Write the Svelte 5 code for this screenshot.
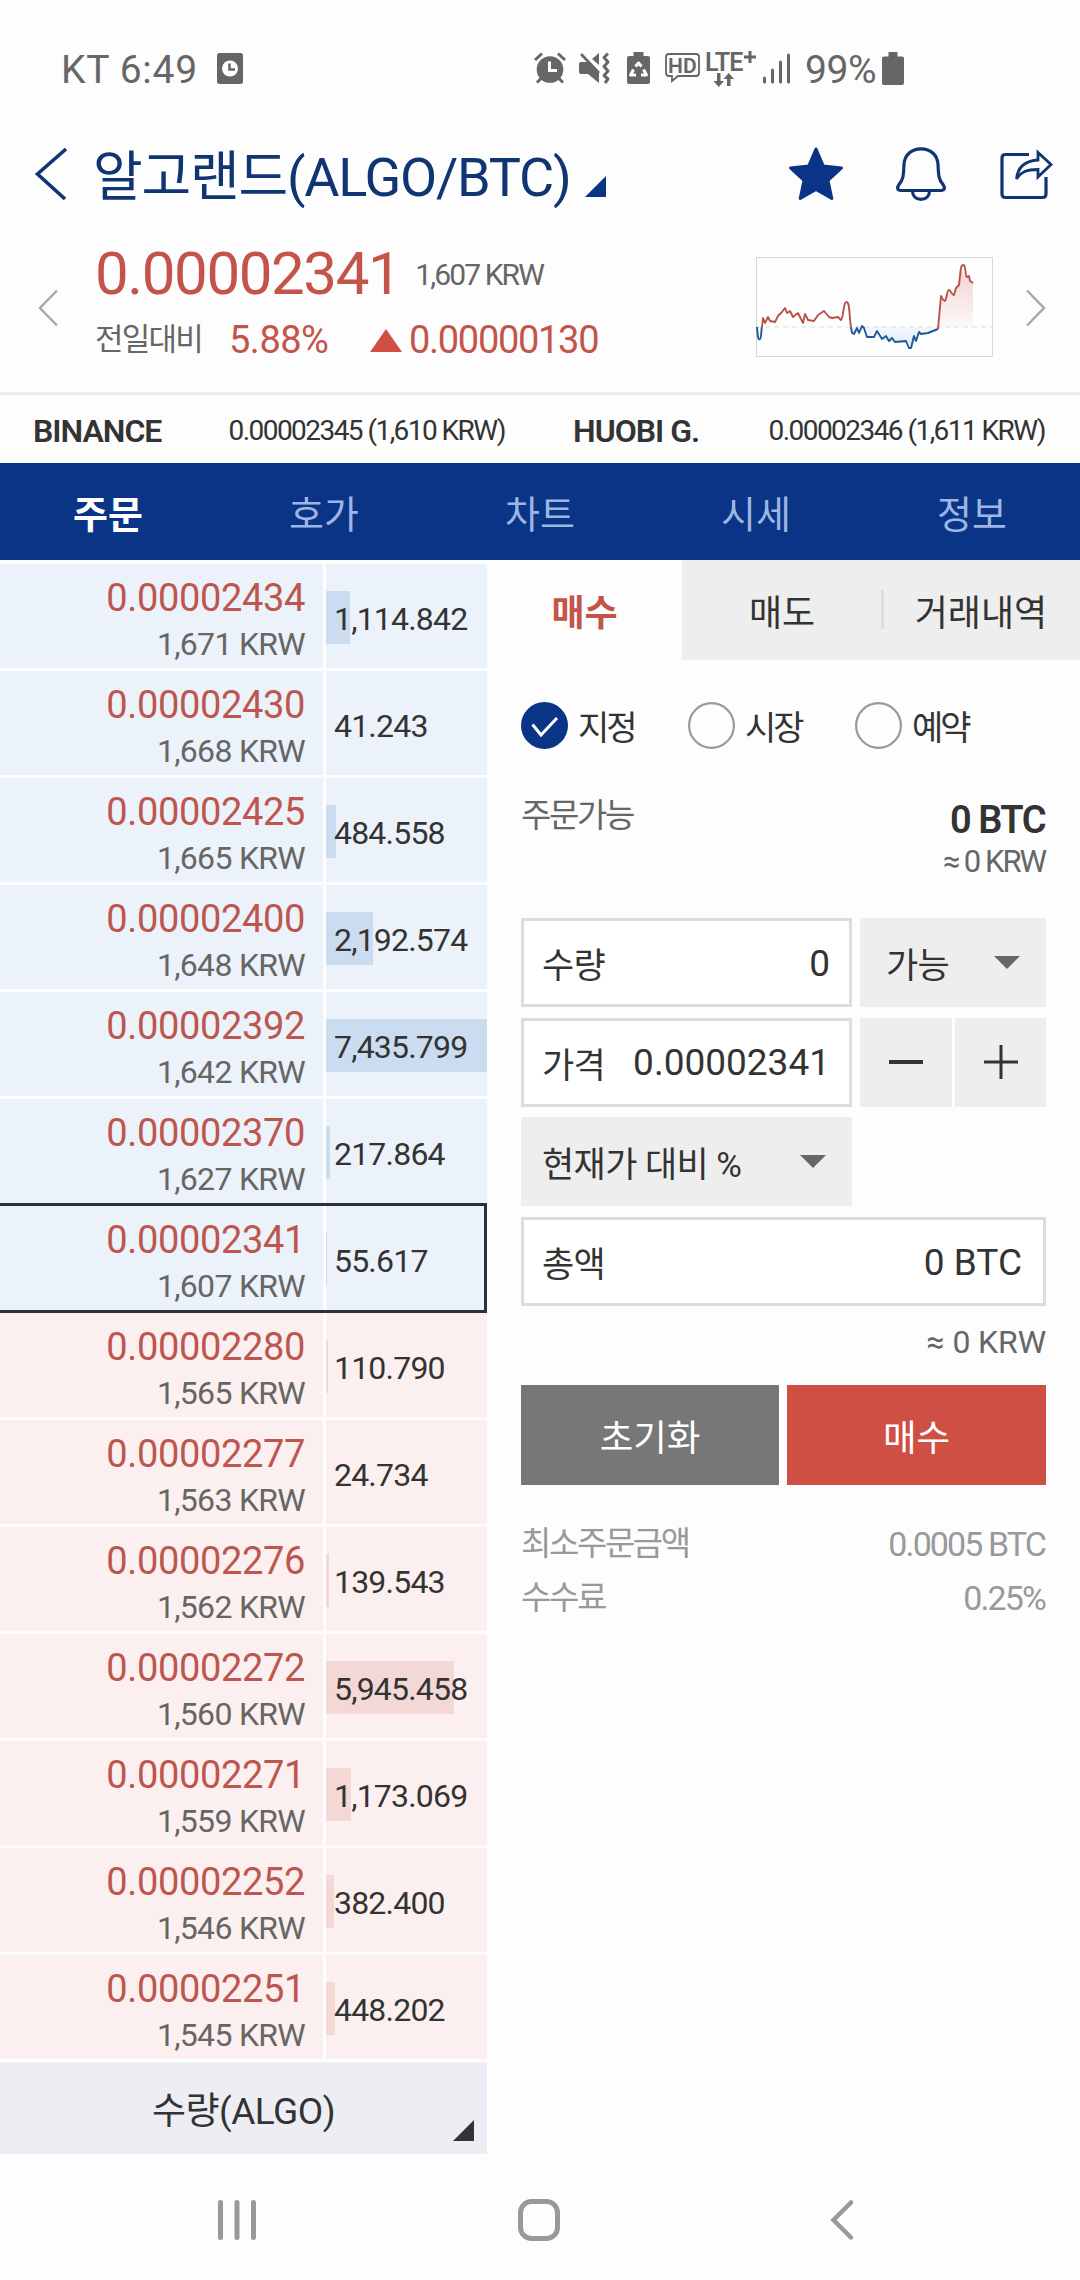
<script>
  const exchanges = [
    { name: 'BINANCE', price: '0.00002345 (1,610 KRW)' },
    { name: 'HUOBI G.', price: '0.00002346 (1,611 KRW)' }
  ];

  const navTabs = ['주문', '호가', '차트', '시세', '정보'];
  const sideTabs = ['매수', '매도', '거래내역'];
  const orderTypes = ['지정', '시장', '예약'];

  const orders = [
    { price: '0.00002434', krw: '1,671', amount: '1,114.842', side: 'ask' },
    { price: '0.00002430', krw: '1,668', amount: '41.243', side: 'ask' },
    { price: '0.00002425', krw: '1,665', amount: '484.558', side: 'ask' },
    { price: '0.00002400', krw: '1,648', amount: '2,192.574', side: 'ask' },
    { price: '0.00002392', krw: '1,642', amount: '7,435.799', side: 'ask' },
    { price: '0.00002370', krw: '1,627', amount: '217.864', side: 'ask' },
    { price: '0.00002341', krw: '1,607', amount: '55.617', side: 'ask' },
    { price: '0.00002280', krw: '1,565', amount: '110.790', side: 'bid' },
    { price: '0.00002277', krw: '1,563', amount: '24.734', side: 'bid' },
    { price: '0.00002276', krw: '1,562', amount: '139.543', side: 'bid' },
    { price: '0.00002272', krw: '1,560', amount: '5,945.458', side: 'bid' },
    { price: '0.00002271', krw: '1,559', amount: '1,173.069', side: 'bid' },
    { price: '0.00002252', krw: '1,546', amount: '382.400', side: 'bid' },
    { price: '0.00002251', krw: '1,545', amount: '448.202', side: 'bid' }
  ];

  let activeNav = $state('주문');
  let activeSide = $state('매수');
  let orderType = $state('지정');
  let price = $state('0.00002341');

  const toNumber = (text) => Number(text.replace(/,/g, ''));
  const maxAmount = Math.max(...orders.map((o) => toNumber(o.amount)));
  const barWidth = (amount) => Math.floor((toNumber(amount) / maxAmount) * 161);
</script>

<div class="screen">
  <div class="status-bar">
    <div class="status-left">
      <span class="carrier">KT 6:49</span>
      <svg width="26" height="31" viewBox="0 0 26 31">
        <rect width="26" height="31" rx="2.5" fill="#666" />
        <circle cx="13" cy="15.5" r="8" fill="#fff" />
        <path d="M12.5 10.5v6h5.5" fill="none" stroke="#666" stroke-width="2.6" />
      </svg>
    </div>
    <div class="status-right">
      <svg class="alarm" width="32" height="32" viewBox="0 0 32 32" fill="none" stroke="#666">
        <circle cx="16" cy="17.5" r="13.3" fill="#666" stroke="none" />
        <path d="M1 8L8 1.5M31 8L24 1.5M3 30.5l5-5M29 30.5l-5-5" stroke-width="3" />
        <path d="M15.5 9.5v9h7.5" stroke="#fff" stroke-width="3" />
      </svg>
      <svg class="mute" width="31" height="32" viewBox="0 0 31 32" fill="#666">
        <path d="M0 12q0-2 2-2h6.5L20 21.500V31L9 22H2q-2 0-2-2z" />
        <path d="M13 7l7-6v12z" />
        <path d="M2 2l18 19" stroke="#666" stroke-width="2.6" />
        <path d="M29 1.500l-4 4 4 4.500-4 4.500 4 4.500-4 4.500 4 3.500-3 4" fill="none" stroke="#666" stroke-width="3" stroke-linejoin="round" />
      </svg>
      <svg class="saver" width="23" height="32" viewBox="0 0 23 32">
        <path d="M6.500 0h10v4H21q2 0 2 2v24q0 2-2 2H2q-2 0-2-2V6q0-2 2-2h4.500z" fill="#666" />
        <path d="M8.500 14.500l3-3.500 3 3.500M6.500 17.500l-3 5.500h5.500M16.500 17.500l3 5.500H14" fill="none" stroke="#fff" stroke-width="3" stroke-linejoin="round" />
      </svg>
      <svg class="hd" width="35" height="30" viewBox="0 0 35 30">
        <path d="M4 1h27q3 0 3 3v16q0 3-3 3H13l-6 5v-5H4q-3 0-3-3V4q0-3 3-3z" fill="none" stroke="#666" stroke-width="1.800" />
        <text x="17.300" y="19.500" text-anchor="middle" class="hd-text">HD</text>
      </svg>
      <svg class="lte" width="50" height="37" viewBox="0 0 50 37">
        <text x="-1" y="20.500" class="lte-text">LTE</text>
        <path d="M38 7h12M44 1v12" stroke="#666" stroke-width="3" />
        <path d="M11 23h3.500v8H18l-5.300 6L7.500 31H11zM21 36h3.500v-7H28l-5.300-6-5.200 6H21z" fill="#666" />
      </svg>
      <svg class="signal" width="28" height="31" viewBox="0 0 28 31" stroke="#666" stroke-width="3" stroke-linecap="round">
        <path d="M1.500 25v4M9.500 17v12M17.500 9v20M25.500 2v27" />
      </svg>
      <span class="percent">99%</span>
      <svg class="battery" width="22" height="33" viewBox="0 0 22 33">
        <path d="M6.500 0h9v4.500H20q2 0 2 2V31q0 2-2 2H2q-2 0-2-2V6.500q0-2 2-2h4.500z" fill="#666" />
      </svg>
    </div>
  </div>

  <header class="title-bar">
    <svg class="back" width="32" height="54" viewBox="0 0 32 54">
      <path d="M31 2L2.500 27 30 52" fill="none" stroke="#0f3573" stroke-width="3.600" />
    </svg>
    <h1>알고랜드(ALGO/BTC)</h1>
    <svg class="title-corner" width="21" height="21" viewBox="0 0 21 21"><path d="M21 0v21H0z" fill="#0a3586" /></svg>
    <div class="title-actions">
      <svg class="star" width="56" height="54" viewBox="0 0 56 54">
        <path d="M28 2l7.300 17 18.200 2L40 33.500 43.800 51.500 28 42.500 12.200 51.500 16 33.500 2.500 21l18.200-2z" fill="#0a3586" stroke="#0a3586" stroke-width="3" stroke-linejoin="round" />
      </svg>
      <svg width="50" height="54" viewBox="0 0 50 54" fill="none" stroke="#0f3573" stroke-width="3.200">
        <path d="M25 1.800C15 1.800 8.500 8.500 8 17.500 7.500 30 7 32.500 3 37.500 0.500 41 1.500 43.500 5 43.500h40c3.500 0 4.500-2.500 2-6C43 32.500 42.500 30 42 17.500 41.500 8.500 35 1.800 25 1.800z" />
        <path d="M16.500 44c0 5 3.500 8.300 8.500 8.300s8.500-3.300 8.500-8.300" />
      </svg>
      <svg width="53" height="52" viewBox="0 0 53 52" fill="none" stroke="#0f3573" stroke-width="3.200">
        <path d="M29 6.500H5.500q-3.500 0-3.500 3.500v36q0 3.500 3.500 3.500h37q3.500 0 3.500-3.500V29" />
        <path d="M38 4.500v7.500C23.500 13 17.500 20.500 16.500 31 21 23.500 27 21.500 38 21.500v7.500L51 16.500z" stroke-width="2.800" />
      </svg>
    </div>
  </header>

  <section class="ticker">
    <svg class="prev" width="20" height="38" viewBox="0 0 20 38"><path d="M19 1.500L2 19l17 17.500" fill="none" stroke="#a8a8a8" stroke-width="2.500" /></svg>
    <div class="ticker-info">
      <div class="ticker-price">
        <strong>{price}</strong>
        <span>1,607 KRW</span>
      </div>
      <div class="ticker-change">
        <span class="label">전일대비</span>
        <span class="rate">5.88%</span>
        <svg width="32" height="23" viewBox="0 0 32 23"><path d="M16 0l16 23H0z" fill="#d04f45" /></svg>
        <span class="diff">0.00000130</span>
      </div>
    </div>
    <svg class="sparkline" width="237" height="100" viewBox="0 0 237 100">
      <defs>
        <linearGradient id="up" x1="0" y1="0" x2="0" y2="1">
          <stop offset="0" stop-color="#d04f45" stop-opacity="0.25" />
          <stop offset="1" stop-color="#d04f45" stop-opacity="0.03" />
        </linearGradient>
        <linearGradient id="down" x1="0" y1="0" x2="0" y2="1">
          <stop offset="0" stop-color="#2a6cc0" stop-opacity="0.04" />
          <stop offset="1" stop-color="#2a6cc0" stop-opacity="0.16" />
        </linearGradient>
      </defs>
      <rect x="0.500" y="0.500" width="236" height="99" fill="#fefefe" stroke="#d8d8d8" />
      <path d="M0 70h237" stroke="#ddd" stroke-width="1" stroke-dasharray="5 4" />
      <path d="M183 70L185 38l4 6 5-10 4 5 3-8 4-20 4 10 4 0 4 6V70z" fill="url(#up)" />
      <path d="M95 70l2 7 14-6 1 9 9-5 6 8 12 3 14 0 3 5 5-12 9-3 14-4v-2z" fill="url(#down)" />
      <g fill="none" stroke-width="1.900" stroke-linejoin="round">
        <path d="M1 70C2 85 3 82 4 82 5.500 82 5 73 6 70" stroke="#1f5797" />
        <path d="M6 70L7 61 9 66 12 60 14 64 19 65 22 59 26 55 29 51 31 56 34 54 37 60 42 56 47 66 49 57 52 63 58 64 62 58 68 54 73 60 76 61 82 60 85 63C88 59 87 45 90.500 45S93 58 95 70" stroke="#b85349" />
        <path d="M95 70L96 76 98 77 101 71 103 76 106 69 108 71 111 80 118 80 121 74 126 82 130 79 133 84 136 81 139 85 150 84 153 91 155 91 158 79 160 84 163 75 165 77 172 76 182 72" stroke="#1f5797" />
        <path d="M182 72L185 39C187 42 187 44 189 44 191 41 191 33 193 33 195 33 196 39 198 38L200 31 203 28C205 9 205 8 207.500 8S209 18 210.500 20L213 19 214 24 217 26" stroke="#b85349" />
      </g>
    </svg>
    <svg class="next" width="20" height="38" viewBox="0 0 20 38"><path d="M1 1.500L18 19 1 36.500" fill="none" stroke="#a8a8a8" stroke-width="2.500" /></svg>
  </section>

  <section class="exchanges">
    {#each exchanges as exchange}
      <div class="exchange">
        <strong>{exchange.name}</strong>
        <span>{exchange.price}</span>
      </div>
    {/each}
  </section>

  <nav class="main-nav">
    {#each navTabs as tab}
      <button class:active={activeNav === tab} onclick={() => (activeNav = tab)}>{tab}</button>
    {/each}
  </nav>

  <main>
    <section class="order-book">
      {#each orders as order}
        <div class="order-row {order.side}" class:current={order.price === '0.00002341'}>
          <div class="order-price">
            <span class="btc">{order.price}</span>
            <span class="krw">{order.krw} KRW</span>
          </div>
          <div class="order-amount">
            <div class="bar" style="width: {barWidth(order.amount)}px"></div>
            <span>{order.amount}</span>
          </div>
        </div>
      {/each}
      <button class="unit-toggle">
        수량(ALGO)
        <svg width="21" height="21" viewBox="0 0 21 21"><path d="M21 0v21H0z" fill="#333" /></svg>
      </button>
    </section>

    <section class="order-panel">
      <div class="side-tabs">
        {#each sideTabs as tab}
          <button class:active={activeSide === tab} onclick={() => (activeSide = tab)}>{tab}</button>
        {/each}
      </div>

      <div class="order-form">
        <div class="order-types">
          {#each orderTypes as type}
            <button onclick={() => (orderType = type)}>
              <svg width="47" height="47" viewBox="0 0 47 47" fill="none">
                {#if orderType === type}
                  <circle cx="23.500" cy="23.500" r="23.500" fill="#0a3586" />
                  <path d="M11.500 22.500l8.500 10.500 16-17" stroke="#fff" stroke-width="3" />
                {:else}
                  <circle cx="23.500" cy="23.500" r="22.400" stroke="#999" stroke-width="2.200" />
                {/if}
              </svg>
              {type}
            </button>
          {/each}
        </div>

        <div class="available">
          <span class="label">주문가능</span>
          <div class="balance">
            <strong>0 BTC</strong>
            <span>≈ 0 KRW</span>
          </div>
        </div>

        <div class="fields">
          <div class="field"><span>수량</span><span class="num">0</span></div>
          <button class="select narrow">
            가능
            <svg width="26" height="13" viewBox="0 0 26 13"><path d="M0 0h26L13 13z" fill="#666" /></svg>
          </button>
          <div class="field"><span>가격</span><span class="num">{price}</span></div>
          <div class="stepper">
            <button aria-label="minus"><svg width="34" height="34" viewBox="0 0 34 34"><path d="M0 17h34" stroke="#333" stroke-width="4" /></svg></button>
            <button aria-label="plus"><svg width="34" height="34" viewBox="0 0 34 34"><path d="M0 17h34M17 0v34" stroke="#333" stroke-width="3" /></svg></button>
          </div>
          <button class="select">
            현재가 대비 %
            <svg width="26" height="13" viewBox="0 0 26 13"><path d="M0 0h26L13 13z" fill="#666" /></svg>
          </button>
          <div class="field total"><span>총액</span><span class="num">0 BTC</span></div>
        </div>

        <div class="total-krw">≈ 0 KRW</div>

        <div class="form-actions">
          <button class="btn-reset">초기화</button>
          <button class="btn-buy">매수</button>
        </div>

        <div class="note"><span>최소주문금액</span><span class="value">0.0005 BTC</span></div>
        <div class="note"><span>수수료</span><span class="value">0.25%</span></div>
      </div>
    </section>
  </main>

  <footer class="system-nav">
    <svg width="38" height="42" viewBox="0 0 38 42" stroke="#999" stroke-width="5" stroke-linecap="round">
      <path d="M2.500 3.500v35M19 3.500v35M35.500 3.500v35" />
    </svg>
    <svg class="home" width="42" height="42" viewBox="0 0 42 42"><rect x="2.500" y="2.500" width="37" height="37" rx="11" fill="none" stroke="#999" stroke-width="5" /></svg>
    <svg width="24" height="42" viewBox="0 0 24 42"><path d="M21 3.500L3.500 21 21 38.500" fill="none" stroke="#999" stroke-width="4.500" stroke-linecap="round" /></svg>
  </footer>
</div>

<style>
  :global(body) {
    background: #fdfdfd;
  }

  .screen {
    width: 1080px;
    height: 2280px;
    display: flex;
    flex-direction: column;
    background: #fdfdfd;
    color: #333;
    font-family: Roboto, 'Noto Sans CJK KR', sans-serif;
    overflow: hidden;
  }

  svg {
    display: block;
    flex-shrink: 0;
    overflow: visible;
  }

  button {
    font: inherit;
    color: inherit;
    letter-spacing: inherit;
    border: none;
    background: none;
    padding: 0;
    margin: 0;
  }

  .status-bar {
    height: 136px;
    box-sizing: border-box;
    padding: 0 176px 0 61px;
    display: flex;
    align-items: center;
    justify-content: space-between;
    color: #666;
    font-size: 39px;
    line-height: 46px;
  }

  .status-left {
    display: flex;
    align-items: center;
    gap: 19px;
  }

  .carrier {
    letter-spacing: 0.700px;
    margin-top: 4px;
  }

  .status-right {
    display: flex;
    align-items: center;
  }

  .mute {
    margin-left: 13px;
  }

  .saver {
    margin-left: 17px;
  }

  .hd {
    margin-left: 15px;
  }

  .hd-text {
    font-size: 21px;
    font-weight: 600;
    fill: #666;
  }

  .lte {
    margin-left: 6px;
  }

  .lte-text {
    font-size: 25px;
    font-weight: 600;
    letter-spacing: -0.900px;
    fill: #666;
  }

  .signal {
    margin-left: 7px;
  }

  .percent {
    margin: 4px 6px 0 14px;
    letter-spacing: -0.5px;
  }

  .title-bar {
    height: 76px;
    padding: 0 27px 0 35px;
    display: flex;
    align-items: center;
    color: #0f3573;
  }

  h1 {
    margin: 8px 0 0 26px;
    font-size: 54px;
    font-weight: 400;
    line-height: 60px;
    letter-spacing: -1.200px;
  }

  .title-corner {
    margin: 24px 0 0 14px;
  }

  .title-actions {
    display: flex;
    align-items: center;
    gap: 54px;
    margin-left: auto;
  }

  .star {
    margin-right: -2px;
  }

  .ticker {
    height: 180px;
    padding: 0 34px 0 38px;
    display: flex;
    border-bottom: 3px solid #ececec;
  }

  .prev,
  .next {
    margin-top: 77px;
  }

  .ticker-info {
    margin-left: 37px;
    flex: 1;
  }

  .ticker-price {
    display: flex;
    height: 70px;
    margin-top: 26px;
    align-items: center;
  }

  .ticker-price strong {
    font-size: 60px;
    font-weight: 400;
    letter-spacing: -1.400px;
    color: #c4544a;
  }

  .ticker-price span {
    font-size: 30px;
    letter-spacing: -1.900px;
    color: #666;
    margin: 2px 0 0 15px;
  }

  .ticker-change {
    display: flex;
    align-items: center;
    height: 56px;
    margin-top: 4px;
    line-height: 56px;
    font-size: 38px;
    color: #c4544a;
  }

  .ticker-change .label {
    width: 134px;
    font-size: 31px;
    letter-spacing: -1.800px;
    color: #666;
  }

  .ticker-change .rate {
    width: 141px;
    letter-spacing: -0.500px;
  }

  .ticker-change .diff {
    margin-left: 7px;
    letter-spacing: -1.300px;
  }

  .sparkline {
    margin-top: 45px;
  }

  .next {
    margin-left: 33px;
  }

  .exchanges {
    height: 66px;
    padding: 2px 34px 0 33px;
    display: flex;
    justify-content: space-between;
    line-height: 68px;
  }

  .exchange {
    display: flex;
    justify-content: space-between;
    width: 473px;
  }

  .exchange strong {
    font-size: 32px;
    font-weight: 600;
    letter-spacing: -1px;
  }

  .exchange span {
    font-size: 28px;
    letter-spacing: -1.550px;
    margin-right: 1px;
  }

  .main-nav {
    height: 97px;
    display: flex;
    background: #0a3586;
    color: #9fb5e3;
    font-size: 38px;
  }

  .main-nav button {
    flex: 1;
  }

  .main-nav .active {
    color: #fff;
    font-weight: 700;
  }

  main {
    flex: 1;
    display: flex;
  }

  .order-book {
    width: 487px;
    padding-top: 4px;
  }

  .order-row {
    position: relative;
    display: flex;
    gap: 3px;
    height: 104px;
    margin-bottom: 3px;
  }

  .order-row > div {
    background: #ebf2fa;
  }

  .order-row.bid > div {
    background: #fbf0ef;
  }

  .order-row.current::after {
    content: '';
    position: absolute;
    inset: -3px 0 -3px 0;
    border: 3px solid #2c3236;
    border-left: none;
  }

  .order-price {
    width: 323px;
    box-sizing: border-box;
    padding: 11px 18px 0 0;
    display: flex;
    flex-direction: column;
    align-items: flex-end;
  }

  .btc {
    font-size: 38px;
    line-height: 46px;
    letter-spacing: -0.350px;
    color: #bd564e;
  }

  .krw {
    font-size: 32px;
    line-height: 47px;
    letter-spacing: -0.700px;
    color: #666;
  }

  .order-amount {
    position: relative;
    width: 161px;
    line-height: 110px;
    font-size: 32px;
    letter-spacing: -0.800px;
  }

  .order-amount span {
    position: relative;
    margin-left: 8px;
  }

  .bar {
    position: absolute;
    top: 27px;
    left: 0;
    height: 53px;
    background: #cbdcf0;
  }

  .bid .bar {
    background: #f4d8d6;
  }

  .unit-toggle {
    position: relative;
    display: block;
    width: 487px;
    height: 92px;
    background: #edeef4;
    font-size: 37px;
    letter-spacing: -0.500px;
  }

  .unit-toggle svg {
    position: absolute;
    right: 13px;
    bottom: 13px;
  }

  .order-panel {
    flex: 1;
  }

  .side-tabs {
    display: grid;
    grid-template-columns: 195px 200px 198px;
    height: 100px;
    font-size: 36px;
  }

  .side-tabs button {
    position: relative;
    background: #eee;
  }

  .side-tabs button:last-child::before {
    content: '';
    position: absolute;
    left: -1px;
    top: 30px;
    width: 3px;
    height: 39px;
    background: #dcdcdc;
  }

  .side-tabs .active {
    background: none;
    color: #c4544a;
    font-weight: 700;
  }

  .order-form {
    padding: 42px 34px 0;
  }

  .order-types {
    display: flex;
    font-size: 34px;
    letter-spacing: -3px;
  }

  .order-types button {
    display: flex;
    align-items: center;
    gap: 10px;
    width: 167px;
    height: 47px;
    white-space: nowrap;
  }

  .available {
    display: flex;
    justify-content: space-between;
    height: 169px;
    box-sizing: border-box;
    padding: 44px 1px 0 0;
  }

  .available .label {
    font-size: 33px;
    line-height: 46px;
    letter-spacing: -2.400px;
    color: #666;
  }

  .balance {
    display: flex;
    flex-direction: column;
    align-items: flex-end;
  }

  .balance strong {
    font-size: 38px;
    line-height: 54px;
    font-weight: 600;
    letter-spacing: -1.500px;
  }

  .balance span {
    font-size: 31px;
    line-height: 30px;
    letter-spacing: -2px;
    color: #666;
  }

  .fields {
    display: grid;
    grid-template-columns: 331px 186px;
    grid-auto-rows: 89px;
    gap: 10.700px 8px;
    font-size: 35px;
    letter-spacing: -0.600px;
  }

  .field {
    display: flex;
    align-items: center;
    justify-content: space-between;
    border: 3px solid #dcdcdc;
    padding: 0 19px 0 18px;
    background: #fff;
  }

  .field .num {
    font-size: 37px;
    letter-spacing: 0;
    margin-top: 1px;
  }

  .total {
    grid-column: 1 / -1;
  }

  .total .num {
    margin-right: 2px;
  }

  .select {
    display: flex;
    align-items: center;
    justify-content: space-between;
    background: #eee;
    padding: 0 26px 0 21px;
  }

  .narrow {
    padding-left: 26px;
  }

  .stepper {
    display: grid;
    grid-template-columns: 92px 91px;
    gap: 3px;
  }

  .stepper button {
    display: flex;
    align-items: center;
    justify-content: center;
    background: #eee;
  }

  .total-krw {
    height: 79px;
    line-height: 72px;
    text-align: right;
    font-size: 32px;
    letter-spacing: -0.100px;
    color: #666;
  }

  .form-actions {
    display: grid;
    grid-template-columns: 258px 259px;
    gap: 8px;
    height: 100px;
    margin-bottom: 32px;
    color: #fff;
    font-size: 36.500px;
  }

  .btn-reset {
    background: #777;
  }

  .btn-buy {
    background: #d04f45;
  }

  .note {
    display: flex;
    justify-content: space-between;
    height: 54px;
    line-height: 54px;
    padding-right: 1px;
    font-size: 33px;
    letter-spacing: -2.400px;
    color: #999;
  }

  .note .value {
    font-size: 34px;
    letter-spacing: -1.900px;
  }

  .system-nav {
    height: 126px;
    box-sizing: border-box;
    padding: 5px 226px 0 218px;
    display: flex;
    align-items: center;
    justify-content: space-between;
  }

  .home {
    margin-right: 8px;
  }
</style>
